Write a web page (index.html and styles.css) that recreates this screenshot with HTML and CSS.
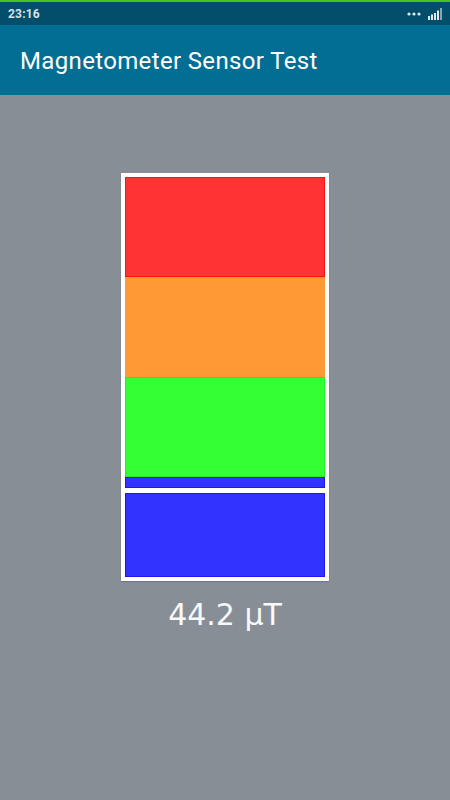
FILE: index.html
```html
<!DOCTYPE html>
<html>
<head>
<meta charset="utf-8">
<link rel="stylesheet" href="styles.css">
</head>
<body>
<div class="screen">
  <div class="statusbar">
    <span class="time">23:16</span>
    <span class="status-icons">
      <svg width="16" height="6" viewBox="0 0 16 6"><circle cx="3" cy="3" r="1.6" fill="#dfe8ec"/><circle cx="8" cy="3" r="1.6" fill="#dfe8ec"/><circle cx="13" cy="3" r="1.6" fill="#dfe8ec"/></svg>
      <svg width="16" height="12" viewBox="0 0 16 12"><rect x="0" y="8" width="2" height="4" fill="#dfe8ec"/><rect x="3" y="6.5" width="2" height="5.5" fill="#dfe8ec"/><rect x="6" y="5" width="2" height="7" fill="#dfe8ec"/><rect x="9" y="2.5" width="2" height="9.5" fill="#dfe8ec"/><rect x="12" y="0" width="2" height="12" fill="#8aa6b2"/></svg>
    </span>
  </div>
  <div class="appbar">
    <h1 class="title">Magnetometer Sensor Test</h1>
  </div>
  <main class="content">
    <div class="gauge">
      <div class="bar bar-red"></div>
      <div class="bar bar-orange"></div>
      <div class="bar bar-green"></div>
      <div class="bar bar-blue-small"></div>
      <div class="bar bar-blue-big"></div>
    </div>
    <div class="reading">44.2 µT</div>
  </main>
</div>
</body>
</html>
```
FILE: styles.css
```css
html, body {
  margin: 0;
  padding: 0;
}
body {
  width: 450px;
  height: 800px;
  background: #878e96;
  font-family: Roboto, "Noto Sans", sans-serif;
  overflow: hidden;
}
.screen {
  width: 450px;
  height: 800px;
  display: flex;
  flex-direction: column;
}
.statusbar {
  height: 23px;
  border-top: 2px solid #4cc21e;
  background: #034f6b;
  display: flex;
  align-items: center;
  justify-content: space-between;
  padding: 0 8px 0 8px;
}
.time {
  color: #d6e2e8;
  font-size: 12px;
  font-weight: 700;
  letter-spacing: 0.2px;
}
.status-icons {
  display: flex;
  align-items: center;
  gap: 6px;
  margin-right: -2px;
}
.appbar {
  height: 70px;
  background: #026e93;
  display: flex;
  align-items: center;
  padding-left: 20px;
}
.title {
  margin: 0;
  padding-top: 2px;
  color: #ffffff;
  font-size: 24px;
  font-weight: 400;
  letter-spacing: 0.35px;
}
.content {
  display: flex;
  flex-direction: column;
  align-items: center;
  padding-top: 78px;
}
.gauge {
  width: 200px;
  background: #ffffff;
  border: 4px solid #ffffff;
  display: flex;
  flex-direction: column;
  box-shadow: 0 1px 1px rgba(0,0,0,0.15);
}
.bar {
  box-sizing: border-box;
  border: 1px solid;
}
.bar-red {
  height: 100px;
  background: #ff3333;
  border-color: #ff1111;
}
.bar-orange {
  height: 100px;
  background: #ff9933;
  border-color: #ff9933;
}
.bar-green {
  height: 100px;
  background: #33ff33;
  border-color: #22ee22;
}
.bar-blue-small {
  height: 11px;
  background: #3333ff;
  border-color: #1a1aee;
}
.bar-blue-big {
  height: 84px;
  margin-top: 5px;
  background: #3333ff;
  border-color: #1a1aee;
}
.reading {
  margin-top: 16px;
  color: #f8f9fa;
  font-family: "DejaVu Sans", Roboto, sans-serif;
  font-size: 30px;
  line-height: 36px;
}
```
